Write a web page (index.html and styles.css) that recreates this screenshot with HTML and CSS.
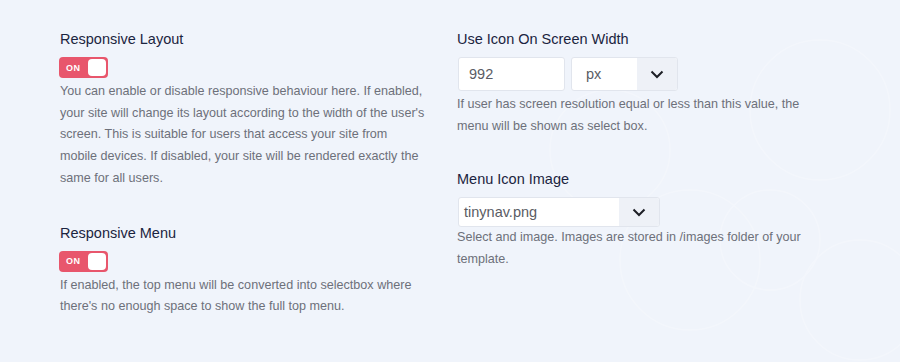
FILE: index.html
```html
<!DOCTYPE html>
<html lang="en">
<head>
  <meta charset="UTF-8">
  <title>Menu settings</title>
  <link rel="stylesheet" href="styles.css">
</head>
<body>
<div class="page">
  <svg class="deco" width="460" height="362" viewBox="0 0 460 362">
    <circle cx="170" cy="150" r="60"/>
    <circle cx="250" cy="260" r="70"/>
    <circle cx="380" cy="110" r="70"/>
    <circle cx="330" cy="240" r="50"/>
    <circle cx="420" cy="300" r="60"/>
  </svg>

  <div class="col">
    <div class="field">
      <h3 class="label">Responsive Layout</h3>
      <div class="toggle"><span class="toggle-text">ON</span><span class="knob"></span></div>
      <p class="help">You can enable or disable responsive behaviour here. If enabled, your site will change its layout according to the width of the user's screen. This is suitable for users that access your site from mobile devices. If disabled, your site will be rendered exactly the same for all users.</p>
    </div>
    <div class="field">
      <h3 class="label">Responsive Menu</h3>
      <div class="toggle"><span class="toggle-text">ON</span><span class="knob"></span></div>
      <p class="help">If enabled, the top menu will be converted into selectbox where there's no enough space to show the full top menu.</p>
    </div>
  </div>

  <div class="col col-right">
    <div class="field">
      <h3 class="label">Use Icon On Screen Width</h3>
      <div class="input-row">
        <div class="input">992</div>
        <div class="select select-unit">
          <span class="select-value">px</span>
          <span class="select-arrow">
            <svg width="14" height="9" viewBox="0 0 14 9"><path d="M1.5 1.5 L7 7 L12.5 1.5"/></svg>
          </span>
        </div>
      </div>
      <p class="help">If user has screen resolution equal or less than this value, the menu will be shown as select box.</p>
    </div>
    <div class="field">
      <h3 class="label">Menu Icon Image</h3>
      <div class="select select-image">
        <span class="select-value">tinynav.png</span>
        <span class="select-arrow">
          <svg width="14" height="9" viewBox="0 0 14 9"><path d="M1.5 1.5 L7 7 L12.5 1.5"/></svg>
        </span>
      </div>
      <p class="help">Select and image. Images are stored in /images folder of your template.</p>
    </div>
  </div>
</div>
</body>
</html>
```

FILE: styles.css
```css
* {
  margin: 0;
  padding: 0;
  box-sizing: border-box;
  font-family: "Liberation Sans", Arial, sans-serif;
}

body {
  background: #f0f4fb;
}

.page {
  position: relative;
  height: 362px;
  display: flex;
  gap: 30px;
  padding: 30px 0 0 60px;
  overflow: hidden;
}

.deco {
  position: absolute;
  right: 0;
  top: 0;
  fill: none;
  stroke: #fff;
  stroke-width: 1.5;
  opacity: 0.25;
}

.col {
  position: relative;
  width: 367px;
  display: flex;
  flex-direction: column;
  gap: 34px;
}

.col-right {
  width: 362px;
  gap: 33px;
}

.label {
  font-size: 14.5px;
  font-weight: normal;
  line-height: 18px;
  color: #1b2440;
  margin-bottom: 9px;
}

.toggle {
  width: 49px;
  height: 21px;
  background: #e8566c;
  border-radius: 4px;
  display: flex;
  align-items: center;
  justify-content: space-between;
  padding: 0 2px 0 7px;
  margin-left: -1px;
}

.toggle-text {
  color: #fff;
  font-size: 9px;
  font-weight: bold;
  letter-spacing: 0.5px;
}

.knob {
  width: 18px;
  height: 17px;
  background: #fff;
  border-radius: 4px;
}

.help {
  font-size: 12.6px;
  line-height: 21.7px;
  color: #6d707a;
  margin-top: 3px;
}

.input-row {
  display: flex;
  gap: 6px;
  margin-left: 1px;
}

.input {
  width: 107px;
  height: 34px;
  background: #fff;
  border: 1px solid #e1e5ed;
  border-radius: 3px;
  padding-left: 10px;
  font-size: 14.5px;
  line-height: 32px;
  color: #5a5c64;
}

.select {
  height: 34px;
  display: flex;
  background: #fff;
  border: 1px solid #e1e5ed;
  border-radius: 3px;
  overflow: hidden;
}

.select-unit {
  width: 107px;
}

.select-unit .select-value {
  padding-left: 14px;
}

.select-image {
  width: 202px;
  height: 30px;
  margin-left: 1px;
}

.select-value {
  flex: 1;
  padding-left: 5px;
  font-size: 14.5px;
  line-height: 28px;
  color: #5a5c64;
}

.select-unit .select-value {
  line-height: 32px;
}

.select-arrow {
  width: 40px;
  background: #eef1f7;
  display: flex;
  align-items: center;
  justify-content: center;
}

.select-arrow path {
  fill: none;
  stroke: #1d1f26;
  stroke-width: 2;
}

.select-image + .help {
  margin-top: 0;
}
```
